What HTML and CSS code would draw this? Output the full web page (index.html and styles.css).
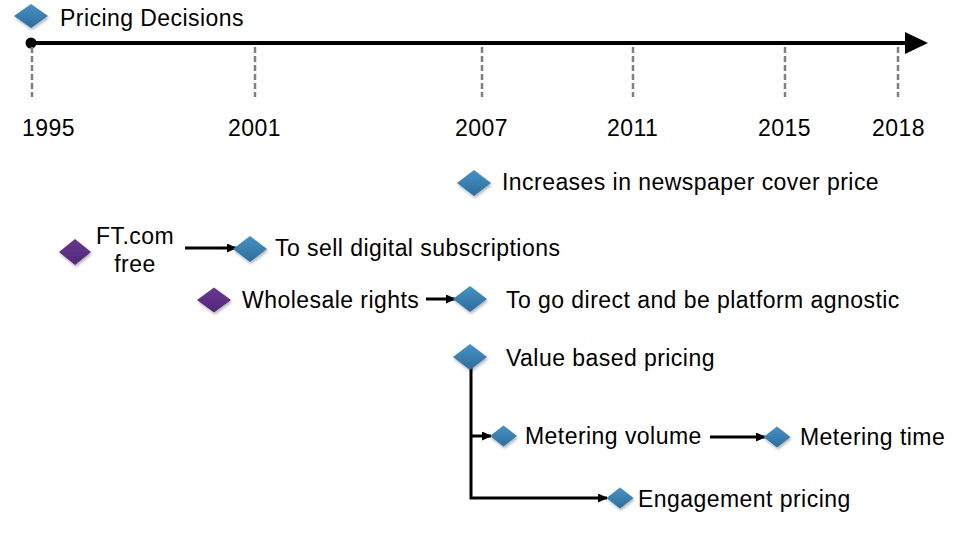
FILE: index.html
```html
<!DOCTYPE html>
<html lang="en">
<head>
<meta charset="utf-8">
<title>Pricing Decisions</title>
<link rel="stylesheet" href="styles.css">
</head>
<body>
<main class="canvas">
<svg class="diagram" width="960" height="540" viewBox="0 0 960 540" xmlns="http://www.w3.org/2000/svg">
  <defs>
    <linearGradient id="gBlue" x1="0" y1="0" x2="0" y2="1">
      <stop offset="0" stop-color="#4693c6"/>
      <stop offset="1" stop-color="#2d6c9c"/>
    </linearGradient>
    <linearGradient id="gPurple" x1="0" y1="0" x2="0" y2="1">
      <stop offset="0" stop-color="#663794"/>
      <stop offset="1" stop-color="#522876"/>
    </linearGradient>
    <filter id="shadow" x="-30%" y="-30%" width="160%" height="170%">
      <feDropShadow dx="1" dy="2" stdDeviation="1.4" flood-color="#000" flood-opacity="0.3"/>
    </filter>
    <marker id="head" markerUnits="userSpaceOnUse" markerWidth="10" markerHeight="9" refX="9" refY="4.5" orient="auto">
      <path d="M0,0 L10,4.5 L0,9 Z" fill="#000"/>
    </marker>
  </defs>

  <!-- timeline -->
  <line class="axis" x1="31" y1="43" x2="908" y2="43"/>
  <polygon class="axis-head" points="905,32 928,43 905,54"/>
  <circle class="axis-dot" cx="31" cy="43" r="5.5"/>

  <g class="ticks">
    <line x1="32" y1="47" x2="32" y2="97"/>
    <line x1="255" y1="47" x2="255" y2="97"/>
    <line x1="482" y1="47" x2="482" y2="97"/>
    <line x1="633" y1="47" x2="633" y2="97"/>
    <line x1="785" y1="47" x2="785" y2="97"/>
    <line x1="898" y1="47" x2="898" y2="97"/>
  </g>

  <g class="years">
    <text x="22" y="136">1995</text>
    <text x="228" y="136">2001</text>
    <text x="455" y="136">2007</text>
    <text x="607" y="136">2011</text>
    <text x="758" y="136">2015</text>
    <text x="872" y="136">2018</text>
  </g>

  <!-- connectors -->
  <g class="links">
    <line x1="185" y1="248" x2="236" y2="248" marker-end="url(#head)"/>
    <line x1="426" y1="299" x2="455" y2="299" marker-end="url(#head)"/>
    <polyline points="471,368 471,498 607,498" marker-end="url(#head)"/>
    <line x1="471" y1="436" x2="491" y2="436" marker-end="url(#head)"/>
    <line x1="710" y1="437" x2="765" y2="437" marker-end="url(#head)"/>
  </g>

  <!-- diamonds -->
  <g class="nodes">
    <polygon class="blue" points="14,16 31,4 48,16 31,28"/>
    <polygon class="blue" points="457,183 474,170 491,183 474,196"/>
    <polygon class="purple" points="59,252 75,239 91,252 75,265"/>
    <polygon class="blue" points="233,249 250,236 267,249 250,262"/>
    <polygon class="purple" points="197,300 214,287.5 231,300 214,312.5"/>
    <polygon class="blue" points="453,299 470,286 487,299 470,312"/>
    <polygon class="blue" points="453,357 470,344 487,357 470,370"/>
    <polygon class="blue" points="490,436 503.5,425.5 517,436 503.5,446.5"/>
    <polygon class="blue" points="763.5,437 777,426.5 790.5,437 777,447.5"/>
    <polygon class="blue" points="606.5,498 620,487.5 633.5,498 620,508.5"/>
  </g>

  <!-- labels -->
  <g class="labels">
    <text x="60" y="26">Pricing Decisions</text>
    <text x="502" y="190">Increases in newspaper cover price</text>
    <text class="center" x="135" y="244">FT.com</text>
    <text class="center" x="135" y="272">free</text>
    <text x="275" y="256">To sell digital subscriptions</text>
    <text x="242" y="308">Wholesale rights</text>
    <text x="506" y="308">To go direct and be platform agnostic</text>
    <text x="506" y="366">Value based pricing</text>
    <text x="525" y="444">Metering volume</text>
    <text x="800" y="445">Metering time</text>
    <text x="638" y="507">Engagement pricing</text>
  </g>
</svg>
</main>
</body>
</html>
```

FILE: styles.css
```css
html, body {
  margin: 0;
  padding: 0;
  background: #ffffff;
}

.canvas {
  position: relative;
  width: 960px;
  height: 540px;
  overflow: hidden;
}

.diagram {
  display: block;
}

.axis {
  stroke: #000;
  stroke-width: 4;
}

.axis-head,
.axis-dot {
  fill: #000;
}

.ticks line {
  stroke: #7f7f7f;
  stroke-width: 2.5;
  stroke-dasharray: 6 3;
}

.links line,
.links polyline {
  stroke: #000;
  stroke-width: 3;
  fill: none;
}

.nodes polygon {
  filter: url(#shadow);
}

.nodes .blue {
  fill: url(#gBlue);
}

.nodes .purple {
  fill: url(#gPurple);
}

.years text,
.labels text {
  font-family: "Liberation Sans", Arial, sans-serif;
  font-size: 23px;
  letter-spacing: 0.45px;
  fill: #000;
}

.labels .center {
  text-anchor: middle;
}
```
